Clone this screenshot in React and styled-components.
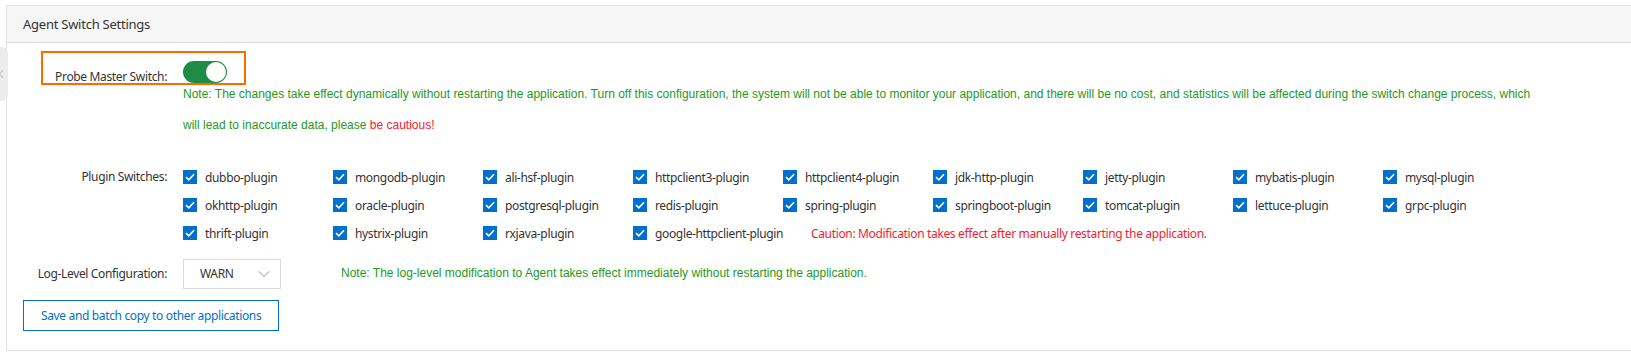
import React from "react";
import styled, { createGlobalStyle } from "styled-components";
import { ChevronDown, ChevronLeft } from "lucide-react";

const GlobalStyle = createGlobalStyle`
  body {
    margin: 0;
    background: #ffffff;
    font-family: "Noto Sans", "Open Sans", sans-serif;
    letter-spacing: -0.35px;
    color: #333333;
  }
`;

const Page = styled.div`
  position: relative;
  padding: 5px 0 0 6px;
  height: 352px;
  box-sizing: border-box;
  overflow: hidden;
`;

const SideTab = styled.div`
  position: absolute;
  left: -10px;
  top: 47px;
  width: 18px;
  height: 54px;
  background: #ececec;
  border-radius: 0 6px 6px 0;
  display: flex;
  align-items: center;
  justify-content: flex-end;
  color: #c4c4c4;
`;

const Panel = styled.div`
  border: 1px solid #e3e3e3;
  border-right: none;
  height: 346px;
  box-sizing: border-box;
`;

const PanelHeader = styled.div`
  height: 36px;
  background: #f6f6f6;
  border-bottom: 1px solid #dcdcdc;
  display: flex;
  align-items: center;
  padding-left: 16px;
  font-size: 13px;
  letter-spacing: -0.25px;
  color: #333;
`;

const PanelBody = styled.div`
  position: relative;
  padding: 18px 0 0 0;
`;

const Highlight = styled.div`
  position: absolute;
  left: 34px;
  top: 8px;
  width: 201px;
  height: 30px;
  border: 2px solid #ff6a00;
`;

const FormRow = styled.div`
  display: grid;
  grid-template-columns: 160px 1fr;
  column-gap: 16px;
  align-items: ${(p) => p.$align || "center"};
  margin-top: ${(p) => p.$top || 0}px;
`;

const Label = styled.div`
  text-align: right;
  font-size: 12px;
  color: #333;
  line-height: ${(p) => p.$lh || 18}px;
  white-space: nowrap;
`;

const Toggle = styled.div`
  width: 44px;
  height: 22px;
  border-radius: 11px;
  background: #1f8c45;
  box-sizing: border-box;
  padding: 1px;
  display: flex;
  justify-content: flex-end;
`;

const Knob = styled.div`
  width: 20px;
  height: 20px;
  border-radius: 50%;
  background: #fff;
`;

const Note = styled.div`
  font-family: "Liberation Sans", Arial, sans-serif;
  font-size: 12px;
  letter-spacing: 0;
  line-height: 31px;
  color: #1d9a1d;
  white-space: ${(p) => (p.$nowrap ? "nowrap" : "normal")};
`;

const Red = styled.span`
  color: #f5222d;
`;

const PluginGrid = styled.div`
  display: grid;
  grid-template-columns: repeat(9, 150px);
  row-gap: 10px;
`;

const PluginItem = styled.label`
  display: flex;
  align-items: center;
  gap: 8px;
  font-size: 12px;
  color: #333;
  height: 18px;
  white-space: nowrap;
`;

const Box = styled.span`
  width: 14px;
  height: 14px;
  background: #0070cc;
  display: inline-flex;
  align-items: center;
  justify-content: center;
  flex-shrink: 0;
`;

const Caution = styled.div`
  grid-column: span 5;
  display: flex;
  align-items: center;
  padding-left: 28px;
  font-size: 12px;
  color: #f5222d;
  white-space: nowrap;
`;

const LevelLine = styled.div`
  display: flex;
  align-items: center;
  gap: 60px;
`;

const Select = styled.div`
  width: 98px;
  height: 30px;
  box-sizing: border-box;
  border: 1px solid #dcdcdc;
  display: flex;
  align-items: center;
  justify-content: space-between;
  padding: 0 6px 0 16px;
  font-size: 12px;
  color: #333;
`;

const ActionButton = styled.button`
  margin: 11px 0 0 16px;
  height: 31px;
  padding: 0 17px;
  background: #fff;
  border: 1px solid #0070cc;
  color: #0070cc;
  font-family: "Noto Sans", sans-serif;
  font-size: 12px;
  letter-spacing: -0.35px;
  cursor: pointer;
`;

const plugins = [
  "dubbo-plugin", "mongodb-plugin", "ali-hsf-plugin", "httpclient3-plugin", "httpclient4-plugin",
  "jdk-http-plugin", "jetty-plugin", "mybatis-plugin", "mysql-plugin",
  "okhttp-plugin", "oracle-plugin", "postgresql-plugin", "redis-plugin", "spring-plugin",
  "springboot-plugin", "tomcat-plugin", "lettuce-plugin", "grpc-plugin",
  "thrift-plugin", "hystrix-plugin", "rxjava-plugin", "google-httpclient-plugin",
];

function Check() {
  return (
    <svg width="10" height="8" viewBox="0 0 10 8">
      <path d="M1 4.2 L3.8 6.8 L9 1.2" fill="none" stroke="#fff" strokeWidth="1.6" />
    </svg>
  );
}

export default function App() {
  return (
    <>
      <GlobalStyle />
      <Page>
        <SideTab>
          <ChevronLeft size={14} strokeWidth={2} />
        </SideTab>
        <Panel>
          <PanelHeader>Agent Switch Settings</PanelHeader>
          <PanelBody>
            <Highlight />
            <FormRow $align="end">
              <Label $lh={12}>Probe Master Switch:</Label>
              <Toggle>
                <Knob />
              </Toggle>
            </FormRow>
            <FormRow $top={-4}>
              <span />
              <Note>
                Note: The changes take effect dynamically without restarting the application. Turn off this
                configuration, the system will not be able to monitor your application, and there will be no cost,
                and statistics will be affected during the switch change process, which
                <br />
                will lead to inaccurate data, please <Red>be cautious!</Red>
              </Note>
            </FormRow>
            <FormRow $top={27} $align="start">
              <Label>Plugin Switches:</Label>
              <PluginGrid>
                {plugins.map((p) => (
                  <PluginItem key={p}>
                    <Box>
                      <Check />
                    </Box>
                    {p}
                  </PluginItem>
                ))}
                <Caution>Caution: Modification takes effect after manually restarting the application.</Caution>
              </PluginGrid>
            </FormRow>
            <FormRow $top={16}>
              <Label>Log-Level Configuration:</Label>
              <LevelLine>
                <Select>
                  WARN
                  <ChevronDown size={20} strokeWidth={1} color="#777" />
                </Select>
                <Note $nowrap>
                  Note: The log-level modification to Agent takes effect immediately without restarting the application.
                </Note>
              </LevelLine>
            </FormRow>
            <ActionButton>Save and batch copy to other applications</ActionButton>
          </PanelBody>
        </Panel>
      </Page>
    </>
  );
}
